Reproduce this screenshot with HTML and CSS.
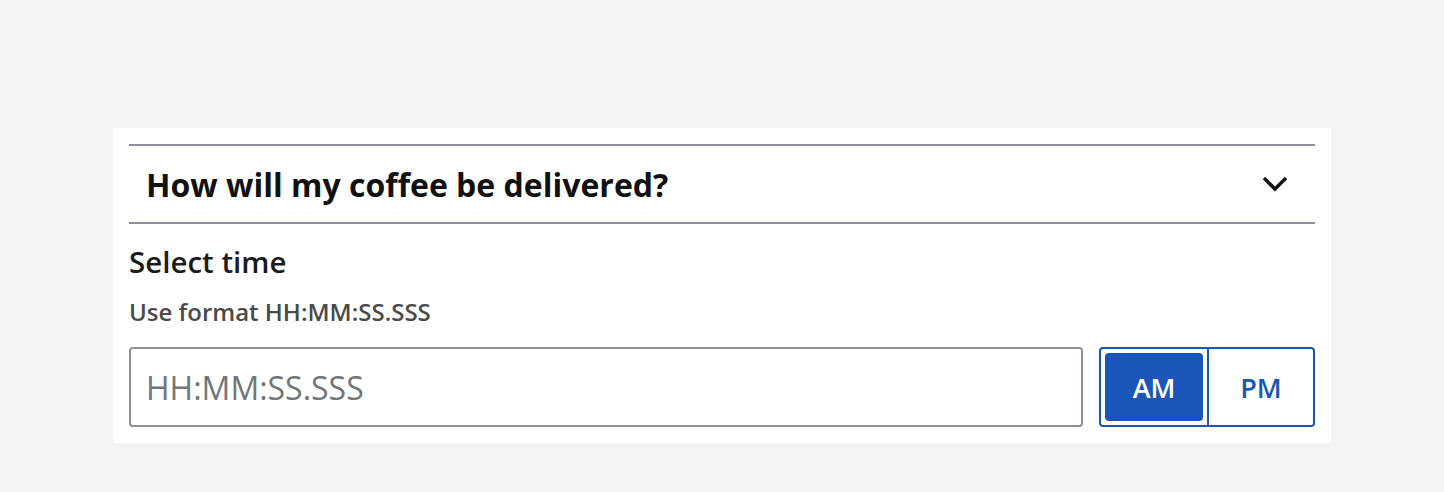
FILE: index.html
```html
<!DOCTYPE html>
<html lang="en">
<head>
<meta charset="utf-8">
<title>Coffee delivery</title>
<link rel="stylesheet" href="styles.css">
</head>
<body>
<div class="page">
  <section class="card">
    <div class="accordion">
      <button class="acc-btn" type="button">
        <span class="acc-title">How will my coffee be delivered?</span>
        <svg class="chev" width="26" height="16" viewBox="0 0 26 16" aria-hidden="true"><polyline points="2,2 13,13 24,2" fill="none" stroke="#111" stroke-width="3.4"/></svg>
      </button>
    </div>
    <div class="field">
      <label class="label" for="t">Select time</label>
      <div class="hint">Use format HH:MM:SS.SSS</div>
      <div class="row">
        <input id="t" class="input" type="text" placeholder="HH:MM:SS.SSS">
        <div class="toggle">
          <button class="seg active" type="button">AM</button>
          <span class="divider"></span>
          <button class="seg" type="button">PM</button>
        </div>
      </div>
    </div>
  </section>
</div>
</body>
</html>
```
FILE: styles.css
```css
* { box-sizing: border-box; }
html, body { margin: 0; padding: 0; }
body {
  background: #f3f3f3;
  font-family: "Open Sans", "Noto Sans", sans-serif;
  color: #111;
  width: 1444px;
  height: 492px;
}
.page {
  padding: 128px 113px 0 113px;
}
.card {
  background: #fff;
  padding: 16px;
}
.accordion {
  border-top: 2px solid #8d909c;
  border-bottom: 2px solid #8d909c;
}
.acc-btn {
  display: flex;
  align-items: center;
  justify-content: space-between;
  width: 100%;
  height: 76px;
  padding: 0 27px 0 17px;
  border: 0;
  background: #fff;
  font-family: inherit;
  cursor: pointer;
}
.acc-title {
  font-size: 32px;
  font-weight: 700;
  color: #111;
}
.chev { display: block; }
.field {
  padding-top: 20px;
}
.label {
  display: block;
  font-size: 29.5px;
  font-weight: 600;
  line-height: 36px;
  color: #1b1b1b;
}
.hint {
  margin-top: 17px;
  font-size: 24px;
  font-weight: 600;
  line-height: 30px;
  color: #4a4a4a;
}
.row {
  display: flex;
  gap: 16px;
  margin-top: 20px;
}
.input {
  flex: 1;
  height: 80px;
  border: 2px solid #8d909c;
  border-radius: 4px;
  padding: 0 15px;
  font-family: inherit;
  font-size: 32px;
  color: #111;
  outline: none;
}
.input::placeholder { color: #71767a; }
.toggle {
  display: flex;
  align-items: stretch;
  width: 216px;
  height: 80px;
  border: 2px solid #1a56b9;
  border-radius: 4px;
  padding: 4px 0 4px 4px;
}
.seg {
  border: 0;
  background: #fff;
  font-family: inherit;
  font-size: 27px;
  font-weight: 600;
  color: #1a56b9;
  border-radius: 4px;
  cursor: pointer;
}
.seg.active {
  width: 98px;
  background: #1a56b9;
  color: #fff;
}
.divider {
  width: 2px;
  margin: -4px 0 -4px 4px;
  background: #1a56b9;
}
.seg:last-child { flex: 1; }
```
